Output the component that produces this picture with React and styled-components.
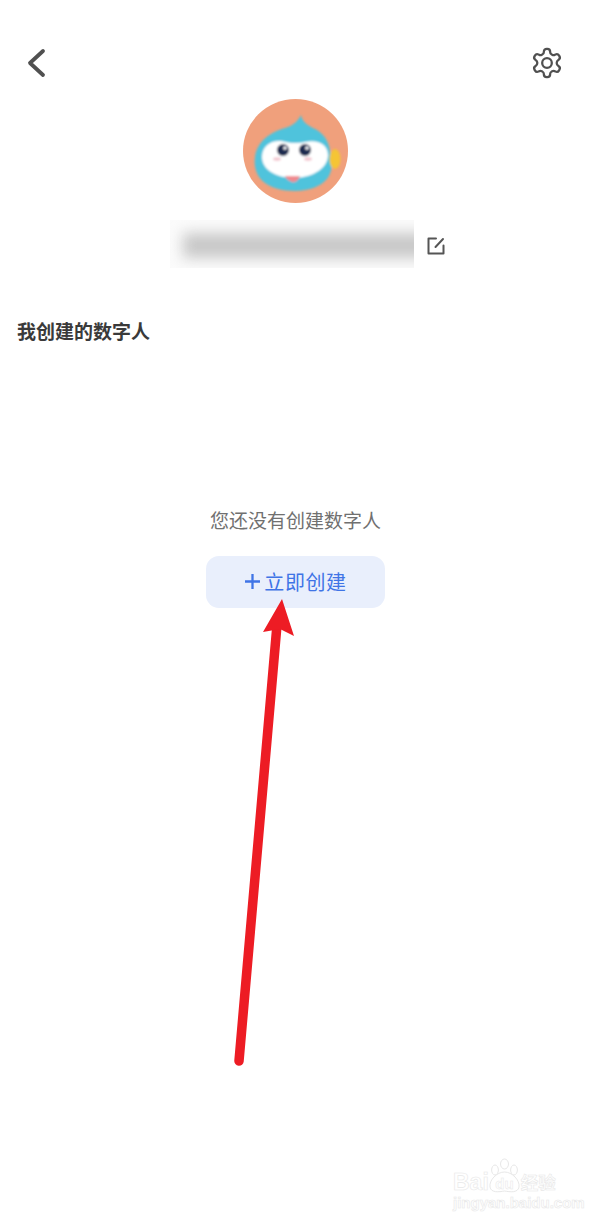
import React from "react";
import styled, { createGlobalStyle } from "styled-components";

const GlobalStyle = createGlobalStyle`
  html, body {
    margin: 0;
    padding: 0;
    background-color: #fff;
  }
  body {
    font-family: "Noto Sans CJK SC", "Noto Sans", sans-serif;
  }
`;

const Page = styled.div`
  position: relative;
  width: 591px;
  height: 1223px;
  overflow: hidden;
  background-color: #fff;
`;
const TopBar = styled.div`
  display: flex;
  justify-content: space-between;
  align-items: center;
  height: 40px;
  padding: 43px 27px 0 22px;
`;
const IconButton = styled.div`
  display: flex;
  width: ${(props) => props.$size}px;
  height: ${(props) => props.$size}px;
  color: #505050;
`;
const Profile = styled.div`
  display: flex;
  flex-direction: column;
  align-items: center;
  margin-top: 16px;
`;
const AvatarImg = styled.svg`
  display: block;
  width: 105px;
  height: 104px;
`;
const NameRow = styled.div`
  display: flex;
  align-items: center;
  width: 100%;
  height: 48px;
  margin-top: 17px;
  padding-left: 170px;
  box-sizing: border-box;
`;
const BlurredName = styled.div`
  display: flex;
  align-items: center;
  width: 244px;
  height: 48px;
  overflow: hidden;
  background-color: #fbfbfb;
`;
const BlurBar = styled.div`
  flex-shrink: 0;
  width: 252px;
  height: 25px;
  margin: 3px 0 0 13px;
  background-color: #c8c8c8;
  filter: blur(7px);
`;
const EditIcon = styled.svg`
  display: block;
  width: 20px;
  height: 20px;
  margin: 4px 0 0 12px;
`;
const SectionTitle = styled.div`
  margin: 50px 0 0 17px;
  font-size: 19px;
  line-height: 26px;
  font-weight: 700;
  color: #3a3a3a;
`;
const Empty = styled.div`
  display: flex;
  flex-direction: column;
  align-items: center;
  margin-top: 163px;
`;
const EmptyText = styled.div`
  font-size: 19px;
  line-height: 26px;
  color: #707070;
`;
const CreateButton = styled.div`
  display: flex;
  align-items: center;
  justify-content: center;
  gap: 3px;
  width: 179px;
  height: 50px;
  margin-top: 23px;
  padding-bottom: 2px;
  border-radius: 13px;
  background-color: #e9effc;
  color: #3f74e6;
  font-size: 20px;
  letter-spacing: 0.6px;
`;
const PlusIcon = styled.svg`
  display: block;
  width: 17px;
  height: 17px;
`;
const ArrowOverlay = styled.svg`
  position: absolute;
  left: 225px;
  top: 595px;
  width: 80px;
  height: 480px;
`;
const Watermark = styled.div`
  position: absolute;
  left: 453px;
  top: 1157px;
  width: 106px;
  color: #fff;
  -webkit-text-stroke: 0.6px #e8e8e8;
`;
const WatermarkTop = styled.div`
  display: flex;
  align-items: flex-end;
  height: 37px;
  font-family: "Liberation Sans", sans-serif;
  font-weight: 700;
  font-size: 23px;
  line-height: 24px;
`;
const Paw = styled.svg`
  display: block;
  width: 33px;
  height: 36px;
  margin-left: -1px;
  flex-shrink: 0;
`;
const PawText = styled.text`
  font-family: "Liberation Sans", sans-serif;
  font-size: 15px;
  font-weight: 700;
  stroke-width: 0.5px;
`;
const WatermarkCn = styled.span`
  font-family: "Noto Sans CJK SC", sans-serif;
  font-size: 17.5px;
  line-height: 24px;
  font-weight: 700;
`;
const WatermarkUrl = styled.div`
  margin-top: 2px;
  font-family: "Liberation Sans", sans-serif;
  font-weight: 700;
  font-size: 15px;
  line-height: 13px;
  white-space: nowrap;
`;

const Avatar = () => (
  <AvatarImg viewBox="0 0 105 104">
    <defs>
      <filter id="soft">
        <feGaussianBlur stdDeviation="0.9" />
      </filter>
      <clipPath id="circle">
        <ellipse cx="52.5" cy="52" rx="52.5" ry="52" />
      </clipPath>
    </defs>
    <g clipPath="url(#circle)">
      <rect width="105" height="104" fill="#f0a07c" />
      <g filter="url(#soft)">
        <path
          d="M58 16 C59 22 64 26 70 29 C80 33 86 42 87 52 C94 76 82 91 52 92 C26 92 9 80 12 58 C14 42 28 33 42 29 C50 27 55 22 58 16 Z"
          fill="#4fc3dc"
        />
        <path
          d="M19 58 C19 47 28 41 38 42 C46 44 54 45 62 43 C74 40 85 45 85 56 C85 68 72 78 52 79 C32 79 19 70 19 58 Z"
          fill="#fff"
        />
        <circle cx="40" cy="51" r="6" fill="#1c2a50" />
        <circle cx="62" cy="51" r="6" fill="#1c2a50" />
        <circle cx="42" cy="49" r="1.8" fill="#fff" />
        <circle cx="64" cy="49" r="1.8" fill="#fff" />
        <ellipse cx="34" cy="60" rx="4" ry="1.8" fill="#f3c6cf" />
        <ellipse cx="65" cy="60" rx="4" ry="1.8" fill="#f3c6cf" />
        <path d="M42 77 L57 77 C55 82 52 84 49 83 C46 82 43 80 42 77 Z" fill="#f08a8f" />
        <ellipse cx="92" cy="60" rx="5.5" ry="10" fill="#f5c534" />
      </g>
    </g>
  </AvatarImg>
);

const App = () => {
  return (
    <Page>
      <GlobalStyle />
      <TopBar>
        <IconButton $size={30}>
          <svg viewBox="0 0 30 30" width="30" height="30" fill="none">
            <path
              d="M21 3 L8 15 L21 27"
              stroke="currentColor"
              strokeWidth="3.8"
              strokeLinecap="round"
              strokeLinejoin="round"
            />
          </svg>
        </IconButton>
        <IconButton $size={34}>
          <svg
            viewBox="0 0 24 24"
            width="34"
            height="34"
            fill="none"
            stroke="currentColor"
            strokeWidth="1.6"
            strokeLinecap="round"
            strokeLinejoin="round"
          >
            <path d="M12.22 2h-.44a2 2 0 0 0-2 2v.18a2 2 0 0 1-1 1.73l-.43.25a2 2 0 0 1-2 0l-.15-.08a2 2 0 0 0-2.73.73l-.22.38a2 2 0 0 0 .73 2.73l.15.1a2 2 0 0 1 1 1.72v.51a2 2 0 0 1-1 1.74l-.15.09a2 2 0 0 0-.73 2.73l.22.38a2 2 0 0 0 2.73.73l.15-.08a2 2 0 0 1 2 0l.43.25a2 2 0 0 1 1 1.73V20a2 2 0 0 0 2 2h.44a2 2 0 0 0 2-2v-.18a2 2 0 0 1 1-1.73l.43-.25a2 2 0 0 1 2 0l.15.08a2 2 0 0 0 2.73-.73l.22-.39a2 2 0 0 0-.73-2.73l-.15-.08a2 2 0 0 1-1-1.74v-.5a2 2 0 0 1 1-1.74l.15-.09a2 2 0 0 0 .73-2.73l-.22-.38a2 2 0 0 0-2.73-.73l-.15.08a2 2 0 0 1-2 0l-.43-.25a2 2 0 0 1-1-1.73V4a2 2 0 0 0-2-2z" />
            <circle cx="12" cy="12" r="3.4" />
          </svg>
        </IconButton>
      </TopBar>

      <Profile>
        <Avatar />
        <NameRow>
          <BlurredName>
            <BlurBar />
          </BlurredName>
          <EditIcon viewBox="0 0 20 20" fill="none">
            <path
              d="M10 2.5 H2.5 V17.5 H17.5 V9.5"
              stroke="#555"
              strokeWidth="2"
              strokeLinejoin="round"
              strokeLinecap="round"
            />
            <path d="M9.5 11 L17 3" stroke="#555" strokeWidth="2" strokeLinecap="round" />
          </EditIcon>
        </NameRow>
      </Profile>

      <SectionTitle>我创建的数字人</SectionTitle>

      <Empty>
        <EmptyText>您还没有创建数字人</EmptyText>
        <CreateButton>
          <PlusIcon viewBox="0 0 17 17">
            <path d="M8.5 1 V16 M1 8.5 H16" stroke="#3f74e6" strokeWidth="2.3" />
          </PlusIcon>
          立即创建
        </CreateButton>
      </Empty>

      <ArrowOverlay viewBox="0 0 80 480">
        <path d="M14 466 L52 30" stroke="#ed1c24" strokeWidth="9.5" strokeLinecap="round" />
        <path d="M57 4 L69 41 L55 34 L38 37 Z" fill="#ed1c24" />
      </ArrowOverlay>

      <Watermark>
        <WatermarkTop>
          Bai
          <Paw viewBox="0 0 33 36">
            <g fill="#fff" stroke="#e8e8e8" strokeWidth="1">
              <ellipse cx="7" cy="12" rx="3.4" ry="5" />
              <ellipse cx="16.5" cy="6" rx="4" ry="5" />
              <ellipse cx="26" cy="12" rx="3.4" ry="5" />
              <path d="M16.5 14 C24 14 32 22 31 29 C30 35 22 34 16.5 33 C11 34 3 35 2 29 C1 22 9 14 16.5 14 Z" />
              <PawText x="16.5" y="31" textAnchor="middle">du</PawText>
            </g>
          </Paw>
          <WatermarkCn>经验</WatermarkCn>
        </WatermarkTop>
        <WatermarkUrl>jingyan.baidu.com</WatermarkUrl>
      </Watermark>
    </Page>
  );
};

export default App;
